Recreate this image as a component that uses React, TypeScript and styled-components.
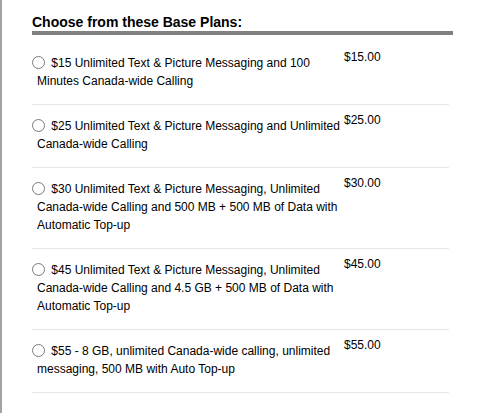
import React from "react";
import styled, { createGlobalStyle } from "styled-components";

const GlobalStyle = createGlobalStyle`
  html, body {
    margin: 0;
    padding: 0;
    background: #ffffff;
  }
  body {
    font-family: "Liberation Sans", Arial, sans-serif;
    color: #000000;
  }
`;

const Page = styled.div`
  min-height: 413px;
  box-sizing: border-box;
  border-left: 2px solid #a3a3a3;
  padding: 14px 0 0 30px;
`;

const Section = styled.section`
  width: 421px;
`;

const Heading = styled.h3`
  margin: 0;
  padding-bottom: 1px;
  font-size: 14px;
  line-height: 16px;
  font-weight: bold;
  border-bottom: 4px solid #808080;
`;

const PlanList = styled.div`
  width: 417px;
  margin-top: 7px;
  display: flex;
  flex-direction: column;
`;

const PlanRow = styled.label`
  display: flex;
  align-items: flex-start;
  border-bottom: 1px solid #e6e6e6;
  font-size: 12px;
  line-height: 18px;
  cursor: pointer;
`;

const Description = styled.div`
  box-sizing: border-box;
  width: 312px;
  padding: 12px 1px 14px 5px;
`;

const Radio = styled.input`
  appearance: none;
  -webkit-appearance: none;
  box-sizing: border-box;
  width: 13px;
  height: 13px;
  margin: 0 3px 0 -5px;
  border: 1px solid #7a7a7a;
  border-radius: 50%;
  background: #ffffff;
  vertical-align: middle;
  position: relative;
  top: -1px;

  &:checked {
    border-color: #0075ff;
    box-shadow: inset 0 0 0 2px #ffffff;
    background: #0075ff;
  }
`;

const Price = styled.div`
  padding-top: 6px;
`;

const plans = [
  { id: "p15", text: "$15 Unlimited Text & Picture Messaging and 100 Minutes Canada-wide Calling", price: "$15.00" },
  { id: "p25", text: "$25 Unlimited Text & Picture Messaging and Unlimited Canada-wide Calling", price: "$25.00" },
  { id: "p30", text: "$30 Unlimited Text & Picture Messaging, Unlimited Canada-wide Calling and 500 MB + 500 MB of Data with Automatic Top-up", price: "$30.00" },
  { id: "p45", text: "$45 Unlimited Text & Picture Messaging, Unlimited Canada-wide Calling and 4.5 GB + 500 MB of Data with Automatic Top-up", price: "$45.00" },
  { id: "p55", text: "$55 - 8 GB, unlimited Canada-wide calling, unlimited messaging, 500 MB with Auto Top-up", price: "$55.00" },
];

export default function App() {
  return (
    <>
      <GlobalStyle />
      <Page>
        <Section>
          <Heading>Choose from these Base Plans:</Heading>
          <PlanList>
            {plans.map((p) => (
              <PlanRow key={p.id}>
                <Description>
                  <Radio type="radio" name="baseplan" value={p.id} /> {p.text}
                </Description>
                <Price>{p.price}</Price>
              </PlanRow>
            ))}
          </PlanList>
        </Section>
      </Page>
    </>
  );
}
